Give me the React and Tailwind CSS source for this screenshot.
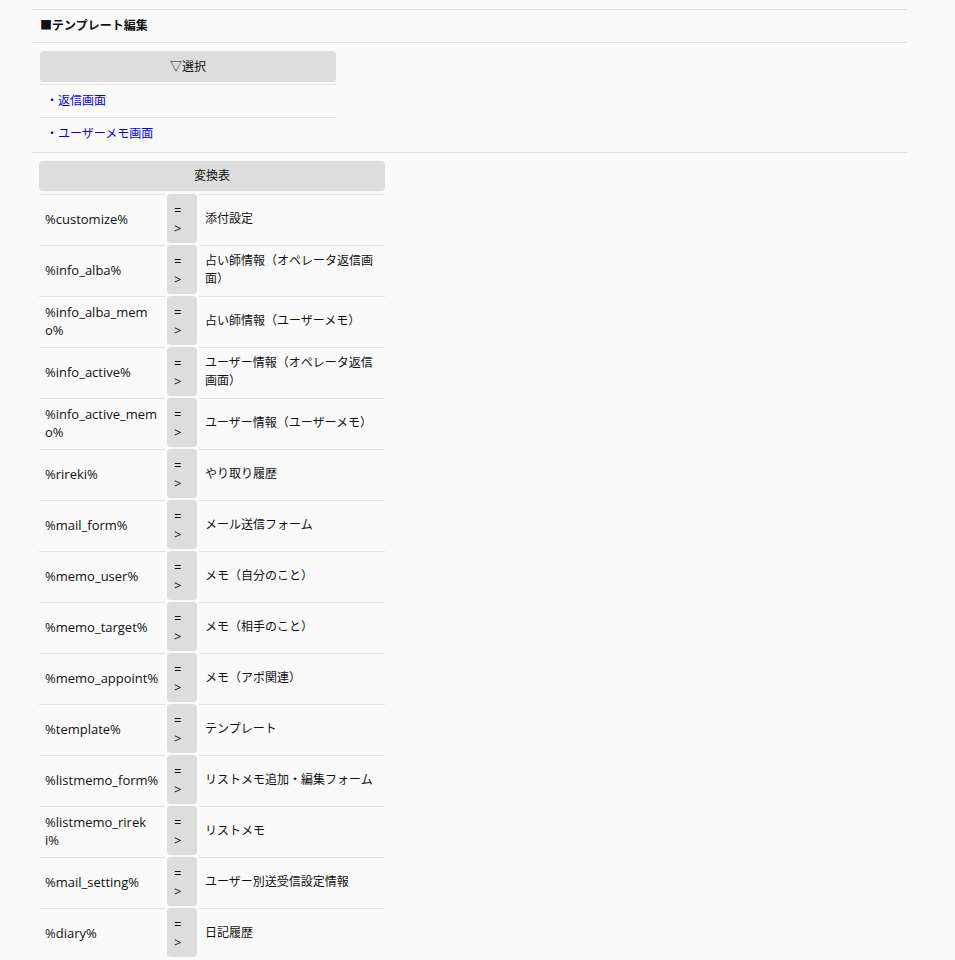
import React from "react";

const rows = [
  [["%customize%"], ["添付設定"]],
  [["%info_alba%"], ["占い師情報（オペレータ返信画", "面）"]],
  [["%info_alba_mem", "o%"], ["占い師情報（ユーザーメモ）"]],
  [["%info_active%"], ["ユーザー情報（オペレータ返信", "画面）"]],
  [["%info_active_mem", "o%"], ["ユーザー情報（ユーザーメモ）"]],
  [["%rireki%"], ["やり取り履歴"]],
  [["%mail_form%"], ["メール送信フォーム"]],
  [["%memo_user%"], ["メモ（自分のこと）"]],
  [["%memo_target%"], ["メモ（相手のこと）"]],
  [["%memo_appoint%"], ["メモ（アポ関連）"]],
  [["%template%"], ["テンプレート"]],
  [["%listmemo_form%"], ["リストメモ追加・編集フォーム"]],
  [["%listmemo_rirek", "i%"], ["リストメモ"]],
  [["%mail_setting%"], ["ユーザー別送受信設定情報"]],
  [["%diary%"], ["日記履歴"]],
];

function Lines({ parts }) {
  return (
    <span>
      {parts.map((p, i) => (
        <React.Fragment key={i}>
          {i > 0 && <br />}
          {p}
        </React.Fragment>
      ))}
    </span>
  );
}

export default function App() {
  return (
    <div
      className="min-h-screen bg-[#fafafa] text-[12px] leading-[18px] text-[#111]"
      style={{ fontFamily: '"Open Sans", "Noto Sans CJK JP", sans-serif' }}
    >
      <div className="ml-[32px] w-[875px] pt-[9px]">
        <div className="h-[34px] border-y border-[#e0e0e0] flex items-center pl-[8px] font-bold">
          ■テンプレート編集
        </div>
        <div className="pl-[8px] pt-[8px] pb-[2px]">
          <div className="w-[296px]">
            <div className="h-[31px] rounded-[4px] bg-[#dddddd] flex items-center justify-center">
              ▽選択
            </div>
            <div className="mt-[2px]">
              <div className="h-[33px] border-t border-[#e0e0e0] flex items-center pl-[6px] text-[#0000ff]">
                ・返信画面
              </div>
              <div className="h-[33px] border-t border-[#e0e0e0] flex items-center pl-[6px] text-[#0000ff]">
                ・ユーザーメモ画面
              </div>
            </div>
          </div>
        </div>
        <div className="border-t border-[#e0e0e0] pl-[7px] pt-[8px]">
          <div className="w-[346px]">
            <div className="h-[30px] rounded-[4px] bg-[#dddddd] flex items-center justify-center">
              変換表
            </div>
            <div className="mt-[3px] flex flex-col gap-[2px]">
              {rows.map(([k, v], i) => (
                <div key={i} className="flex gap-[2px] h-[49px]">
                  <div className="w-[126px] border-t border-[#e3e3e3] flex items-center pl-[6px] text-[13px]">
                    <Lines parts={k} />
                  </div>
                  <div className="w-[30px] rounded-[4px] bg-[#dddddd] flex items-center pl-[7px] text-[13px]">
                    <Lines parts={["=", ">"]} />
                  </div>
                  <div className="w-[186px] border-t border-[#e3e3e3] flex items-center pl-[6px]">
                    <Lines parts={v} />
                  </div>
                </div>
              ))}
            </div>
          </div>
        </div>
      </div>
    </div>
  );
}
